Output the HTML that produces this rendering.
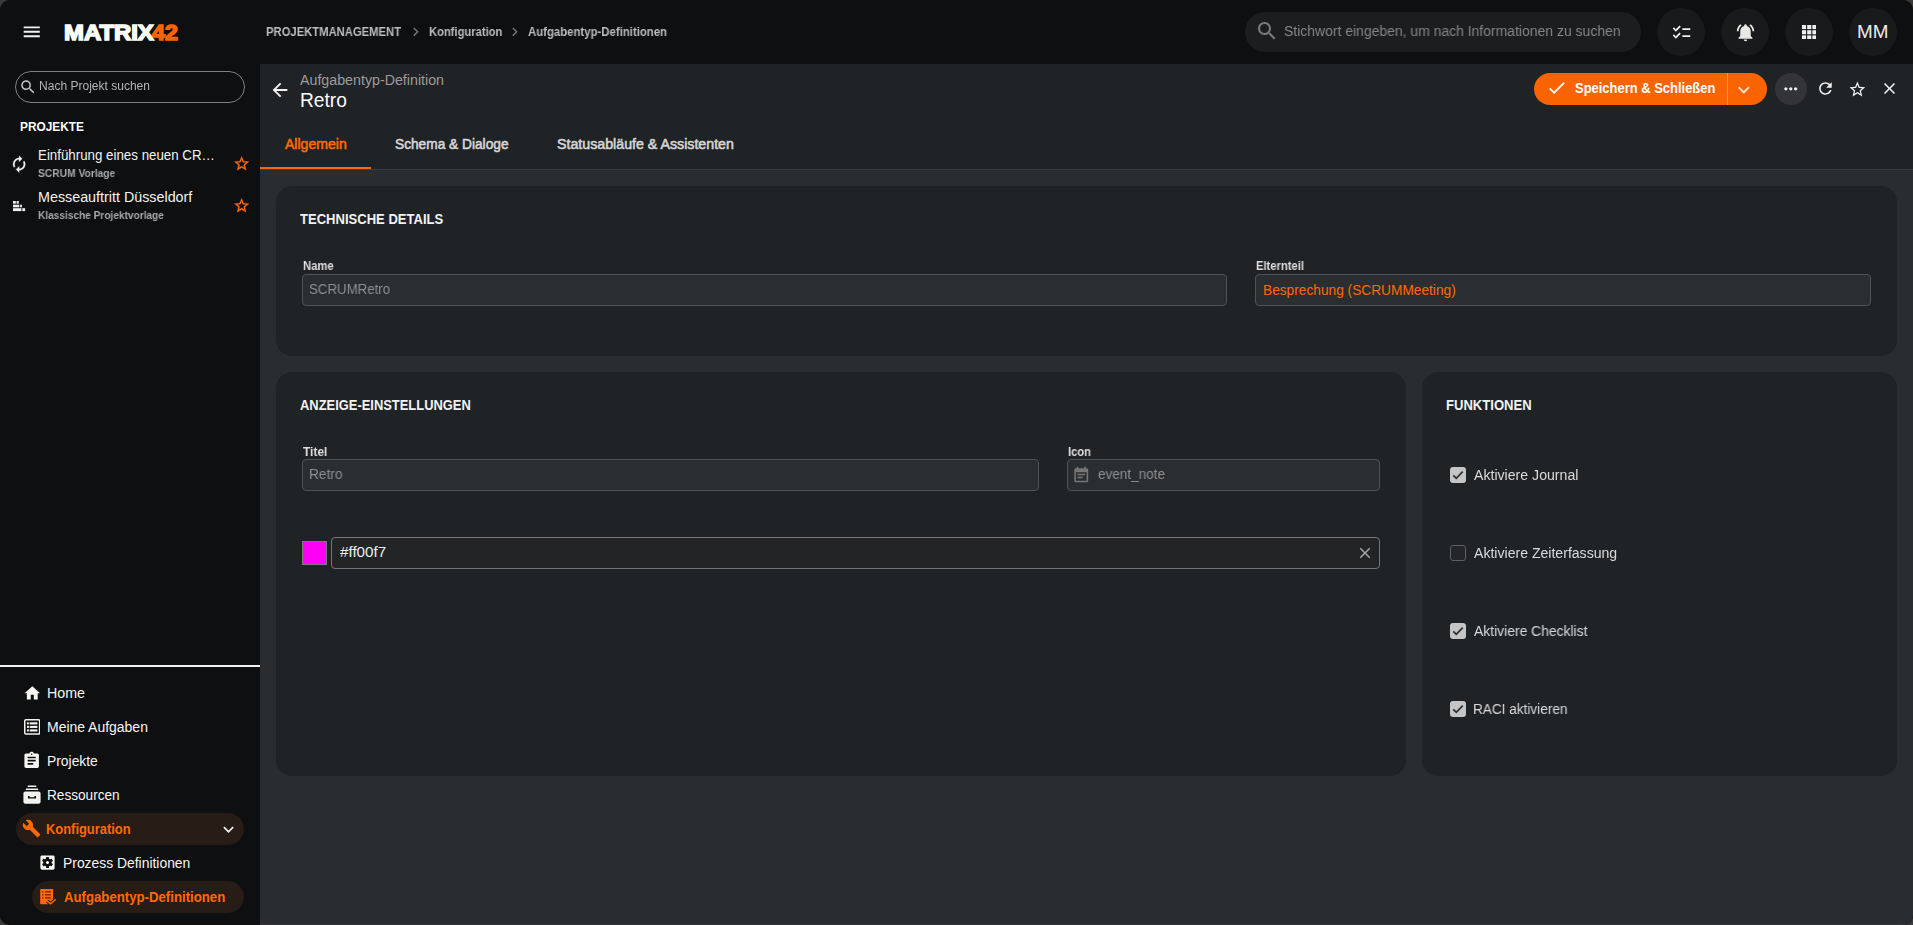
<!DOCTYPE html><html lang="de"><head><meta charset="utf-8"><title>Aufgabentyp-Definition Retro</title><style>html,body{margin:0;padding:0;background:#3a3a3a;}
body{width:1913px;height:925px;position:relative;overflow:hidden;font-family:"Liberation Sans", sans-serif;}
#app{position:absolute;left:0;top:0;width:1913px;height:925px;overflow:hidden;border-radius:10px;background:#0e0f11}
#app>div,#app>svg,#app>span{position:absolute;display:block}
.t{white-space:pre;line-height:1;font-weight:400;transform-origin:0 0}
</style></head><body><div id="app"><div style="left:0px;top:0px;width:1913px;height:925px;background:#0e0f11"></div><div style="left:260px;top:64px;width:1653px;height:106px;background:#202326"></div><div style="left:260px;top:170px;width:1653px;height:755px;background:#2a2d30"></div><div style="left:260px;top:169px;width:1653px;height:1px;background:#3b3e41"></div><div style="left:260px;top:924px;width:1653px;height:1px;background:#36373a"></div><div style="left:260px;top:167px;width:111px;height:2px;background:#ff6900"></div><svg class="i" style="left:21.25px;top:21.25px;width:21.5px;height:21.5px" viewBox="0 0 24 24"><path fill="#f2f2f2" d="M3 18h18v-2H3v2zm0-5h18v-2H3v2zm0-7v2h18V6H3z"/></svg><svg class="i" style="left:406.85px;top:23.35px;width:17.5px;height:17.5px" viewBox="0 0 24 24"><path fill="#747474" d="M10 6L8.59 7.41 13.17 12l-4.58 4.59L10 18l6-6z"/></svg><svg class="i" style="left:505.55px;top:23.35px;width:17.5px;height:17.5px" viewBox="0 0 24 24"><path fill="#747474" d="M10 6L8.59 7.41 13.17 12l-4.58 4.59L10 18l6-6z"/></svg><div style="left:1245px;top:12px;width:396px;height:40px;background:#1c1d1f;border-radius:20px"></div><svg class="i" style="left:1255.10px;top:19.40px;width:24px;height:24px" viewBox="0 0 24 24"><path fill="#7a7a7a" d="M15.5 14h-.79l-.28-.27C15.41 12.59 16 11.11 16 9.5 16 5.91 13.09 3 9.5 3S3 5.91 3 9.5 5.91 16 9.5 16c1.61 0 3.09-.59 4.23-1.57l.27.28v.79l5 4.99L20.49 19l-4.99-5zm-6 0C7.01 14 5 11.99 5 9.5S7.01 5 9.5 5 14 7.01 14 9.5 11.99 14 9.5 14z"/></svg><div style="left:1657px;top:8px;width:48px;height:48px;background:#191a1c;border-radius:50%"></div><div style="left:1721px;top:8px;width:48px;height:48px;background:#191a1c;border-radius:50%"></div><div style="left:1785px;top:8px;width:48px;height:48px;background:#191a1c;border-radius:50%"></div><div style="left:1849px;top:8px;width:48px;height:48px;background:#191a1c;border-radius:50%"></div><svg class="i" style="left:1670.50px;top:21.80px;width:21px;height:21px" viewBox="0 0 24 24"><path fill="#f0f0f0" d="M22 7h-9v2h9V7zm0 8h-9v2h9v-2zM5.54 11L2 7.46l1.41-1.41 2.12 2.12 4.24-4.24 1.41 1.41L5.54 11zm0 8L2 15.46l1.41-1.41 2.12 2.12 4.24-4.24 1.41 1.41L5.54 19z"/></svg><svg class="i" style="left:1734.50px;top:22.00px;width:21px;height:21px" viewBox="0 0 24 24"><path fill="#e8e8e4" d="M7.58 4.08L6.15 2.65C3.75 4.48 2.17 7.3 2.03 10.5h2c.15-2.65 1.51-4.97 3.55-6.42zm12.39 6.42h2c-.15-3.2-1.73-6.02-4.12-7.85l-1.42 1.43c2.02 1.45 3.39 3.77 3.54 6.42zM18 11c0-3.07-1.64-5.64-4.5-6.32V4c0-.83-.67-1.5-1.5-1.5s-1.5.67-1.5 1.5v.68C7.63 5.36 6 7.92 6 11v5l-2 2v1h16v-1l-2-2v-5zm-6 11c.14 0 .27-.01.4-.04.65-.14 1.18-.58 1.44-1.18.1-.24.15-.5.15-.78h-4c.01 1.1.9 2 2.01 2z"/></svg><svg class="i" style="left:1801.8px;top:24.9px;width:14.5px;height:14.5px" viewBox="0 0 14.5 14.5"><g fill="#f0f0f0"><rect x="0.0" y="0.0" width="4.1" height="4.1"/><rect x="5.2" y="0.0" width="4.1" height="4.1"/><rect x="10.4" y="0.0" width="4.1" height="4.1"/><rect x="0.0" y="5.2" width="4.1" height="4.1"/><rect x="5.2" y="5.2" width="4.1" height="4.1"/><rect x="10.4" y="5.2" width="4.1" height="4.1"/><rect x="0.0" y="10.4" width="4.1" height="4.1"/><rect x="5.2" y="10.4" width="4.1" height="4.1"/><rect x="10.4" y="10.4" width="4.1" height="4.1"/></g></svg><div style="left:15px;top:71px;width:230px;height:32px;border:1px solid #808080;border-radius:16px;box-sizing:border-box"></div><svg class="i" style="left:18.80px;top:77.80px;width:18px;height:18px" viewBox="0 0 24 24"><path fill="#c4c4c4" d="M15.5 14h-.79l-.28-.27C15.41 12.59 16 11.11 16 9.5 16 5.91 13.09 3 9.5 3S3 5.91 3 9.5 5.91 16 9.5 16c1.61 0 3.09-.59 4.23-1.57l.27.28v.79l5 4.99L20.49 19l-4.99-5zm-6 0C7.01 14 5 11.99 5 9.5S7.01 5 9.5 5 14 7.01 14 9.5 11.99 14 9.5 14z"/></svg><svg class="i" style="left:9.95px;top:154.75px;width:18.3px;height:18.3px" viewBox="0 0 24 24"><path fill="#f4f4f4" d="M12 6v3l4-4-4-4v3c-4.42 0-8 3.58-8 8 0 1.57.46 3.03 1.24 4.26L6.7 14.8c-.45-.83-.7-1.79-.7-2.8 0-3.31 2.69-6 6-6zm6.76 1.74L17.3 9.2c.44.84.7 1.79.7 2.8 0 3.31-2.69 6-6 6v-3l-4 4 4 4v-3c4.42 0 8-3.58 8-8 0-1.57-.46-3.03-1.24-4.26z" stroke="#f4f4f4" stroke-width="0.4"/></svg><svg class="i" style="left:232.70px;top:155.25px;width:17.3px;height:17.3px" viewBox="0 0 24 24"><path fill="#ff6900" d="M22 9.24l-7.19-.62L12 2 9.19 8.63 2 9.24l5.46 4.73L5.82 21 12 17.27 18.18 21l-1.63-7.03L22 9.24zM12 15.4l-3.76 2.27 1-4.28-3.32-2.88 4.38-.38L12 6.1l1.71 4.04 4.38.38-3.32 2.88 1 4.28L12 15.4z" stroke="#ff6900" stroke-width="0.5"/></svg><svg class="i" style="left:13px;top:201px;width:13px;height:11px" viewBox="0 0 13 11"><g fill="#f0f0f0"><rect x="0" y="0" width="2.800" height="2.700"/><rect x="3.600" y="0" width="2.200" height="2.700"/><rect x="0" y="3.700" width="6.300" height="2.600"/><rect x="7.100" y="3.700" width="1.800" height="2.600"/><rect x="0" y="7.200" width="8.400" height="2.900"/><rect x="9.300" y="7.200" width="2.800" height="2.900"/></g></svg><svg class="i" style="left:232.70px;top:197.25px;width:17.3px;height:17.3px" viewBox="0 0 24 24"><path fill="#ff6900" d="M22 9.24l-7.19-.62L12 2 9.19 8.63 2 9.24l5.46 4.73L5.82 21 12 17.27 18.18 21l-1.63-7.03L22 9.24zM12 15.4l-3.76 2.27 1-4.28-3.32-2.88 4.38-.38L12 6.1l1.71 4.04 4.38.38-3.32 2.88 1 4.28L12 15.4z" stroke="#ff6900" stroke-width="0.5"/></svg><div style="left:0px;top:665px;width:260px;height:2px;background:#f2f2f2"></div><svg class="i" style="left:22.75px;top:683.60px;width:18.6px;height:18.6px" viewBox="0 0 24 24"><path fill="#f6f6f2" d="M10 20v-6h4v6h5v-8h3L12 3 2 12h3v8z"/></svg><svg class="i" style="left:23.7px;top:719px;width:16.4px;height:15.8px" viewBox="0 0 16.4 15.8"><rect x=".75" y=".75" width="14.9" height="14.3" rx="1.2" fill="none" stroke="#f2f2ee" stroke-width="1.5"/><g fill="#f6f6f2"><rect x="3" y="3.3" width="1.900" height="2.100"/><rect x="5.700" y="3.3" width="7.700" height="2.100"/><rect x="3" y="6.850" width="1.900" height="2.100"/><rect x="5.700" y="6.850" width="7.700" height="2.100"/><rect x="3" y="10.400" width="1.900" height="2.100"/><rect x="5.700" y="10.400" width="7.700" height="2.100"/></g></svg><svg class="i" style="left:22.30px;top:751.15px;width:19.3px;height:19.3px" viewBox="0 0 24 24"><path fill="#f6f6f2" d="M19 3h-4.18C14.4 1.84 13.3 1 12 1c-1.3 0-2.4.84-2.82 2H5c-1.1 0-2 .9-2 2v14c0 1.1.9 2 2 2h14c1.1 0 2-.9 2-2V5c0-1.1-.9-2-2-2zm-7 0c.55 0 1 .45 1 1s-.45 1-1 1-1-.45-1-1 .45-1 1-1zm2 14H7v-2h7v2zm3-4H7v-2h10v2zm0-4H7V7h10v2z"/></svg><svg class="i" style="left:23px;top:785px;width:18px;height:20px" viewBox="0 0 18 20"><g fill="#f2f2ee"><rect x="4.6" y="0.6" width="8.8" height="1.5" rx=".5"/><rect x="2.8" y="3.4" width="12.4" height="1.7" rx=".5"/><path d="M2.4 6.6h13.2c1.1 0 2 .9 2 2v8.2c0 1.1-.9 2-2 2H2.4c-1.1 0-2-.9-2-2V8.600c0-1.100.9-2 2-2zM5 11v2.600h8V11h-1.600v1.200H6.600V11z" fill-rule="evenodd"/></g></svg><div style="left:16px;top:813px;width:228px;height:32px;background:#271c16;border-radius:16px"></div><svg class="i" style="left:21.85px;top:819.40px;width:19px;height:19px" viewBox="0 0 24 24"><path fill="#ff6900" d="M22.7 19l-9.1-9.1c.9-2.3.4-5-1.5-6.9-2-2-5-2.4-7.4-1.3L9 6 6 9 1.6 4.7C.4 7.1.9 10.1 2.9 12.1c1.9 1.9 4.6 2.4 6.9 1.5l9.1 9.1c.4.4 1 .4 1.4 0l2.3-2.3c.5-.4.5-1.1.1-1.4z"/></svg><svg class="i" style="left:217.60px;top:818.70px;width:21px;height:21px" viewBox="0 0 24 24"><path fill="#f0f0f0" d="M16.59 8.59L12 13.17 7.41 8.59 6 10l6 6 6-6z"/></svg><svg class="i" style="left:38.40px;top:853.35px;width:19px;height:19px" viewBox="0 0 24 24"><path fill="#f6f6f2" d="M12 10c-1.1 0-2 .9-2 2s.9 2 2 2 2-.9 2-2-.9-2-2-2zm7-7H5c-1.11 0-2 .9-2 2v14c0 1.1.89 2 2 2h14c1.11 0 2-.9 2-2V5c0-1.1-.89-2-2-2zm-1.75 9c0 .23-.02.46-.05.68l1.48 1.16c.13.11.17.3.08.45l-1.4 2.42c-.09.15-.27.21-.43.15l-1.74-.7c-.36.28-.76.51-1.18.69l-.26 1.85c-.03.17-.18.3-.35.3h-2.8c-.17 0-.32-.13-.35-.29l-.26-1.85c-.43-.18-.82-.41-1.18-.69l-1.74.7c-.16.06-.34 0-.43-.15l-1.4-2.42c-.09-.15-.05-.34.08-.45l1.48-1.16c-.03-.23-.05-.46-.05-.69 0-.23.02-.46.05-.68l-1.48-1.16c-.13-.11-.17-.3-.08-.45l1.4-2.42c.09-.15.27-.21.43-.15l1.74.7c.36-.28.76-.51 1.18-.69l.26-1.85c.03-.17.18-.3.35-.3h2.8c.17 0 .32.13.35.29l.26 1.85c.43.18.82.41 1.18.69l1.74-.7c.16-.06.34 0 .43.15l1.4 2.42c.09.15.05.34-.08.45l-1.48 1.16c.03.23.05.46.05.69z"/></svg><div style="left:32px;top:881px;width:212px;height:32px;background:#271c16;border-radius:16px"></div><svg class="i" style="left:40px;top:888.9px;width:17px;height:17px" viewBox="0 0 17 17"><rect x=".2" y="0" width="12.900" height="15.200" rx=".8" fill="#ff6900"/><g fill="#84300d"><rect x="2" y="2.05" width="1.400" height="1.500"/><rect x="5" y="2.05" width="5.900" height="1.500"/><rect x="2" y="5.05" width="1.400" height="1.500"/><rect x="5" y="5.05" width="5.900" height="1.500"/><rect x="2" y="8.15" width="1.400" height="1.500"/><rect x="5" y="8.15" width="5.900" height="1.500"/></g><path fill="none" stroke="#271c16" stroke-width="3.600" d="M7.200 12.100L10.500 14.800L15.800 10.300"/><path fill="none" stroke="#ff6900" stroke-width="1.500" d="M7.200 12.100L10.500 14.800L15.800 10.300"/></svg><svg class="i" style="left:268.80px;top:79.20px;width:22px;height:22px" viewBox="0 0 24 24"><path fill="#f4f4f4" d="M20 11H7.83l5.59-5.59L12 4l-8 8 8 8 1.41-1.41L7.83 13H20v-2z"/></svg><div style="left:1534px;top:73px;width:233px;height:32px;background:#fa6400;border-radius:16px"></div><div style="left:1727px;top:73px;width:1px;height:32px;background:#fc9a5a"></div><svg class="i" style="left:1545.85px;top:77.45px;width:21.5px;height:21.5px" viewBox="0 0 24 24"><path fill="#ffffff" d="M9 16.17L4.83 12l-1.42 1.41L9 19 21 7l-1.41-1.41z"/></svg><svg class="i" style="left:1732.05px;top:77.65px;width:23.5px;height:23.5px" viewBox="0 0 24 24"><path fill="#ffe6d6" d="M16.59 8.59L12 13.17 7.41 8.59 6 10l6 6 6-6z"/></svg><div style="left:1775px;top:73px;width:32px;height:32px;background:#323437;border-radius:50%"></div><svg class="i" style="left:1781.35px;top:79.25px;width:19.5px;height:19.5px" viewBox="0 0 24 24"><path fill="#f0f0f0" d="M6 10c-1.1 0-2 .9-2 2s.9 2 2 2 2-.9 2-2-.9-2-2-2zm12 0c-1.1 0-2 .9-2 2s.9 2 2 2 2-.9 2-2-.9-2-2-2zm-6 0c-1.1 0-2 .9-2 2s.9 2 2 2 2-.9 2-2-.9-2-2-2z"/></svg><svg class="i" style="left:1815.95px;top:79.45px;width:18.9px;height:18.9px" viewBox="0 0 24 24"><path fill="#f0f0f0" d="M17.65 6.35C16.2 4.9 14.21 4 12 4c-4.42 0-7.99 3.58-7.99 8s3.57 8 7.99 8c3.73 0 6.84-2.55 7.73-6h-2.08c-.82 2.33-3.04 4-5.65 4-3.31 0-6-2.69-6-6s2.69-6 6-6c1.66 0 3.14.69 4.22 1.78L13 11h7V4l-2.35 2.35z"/></svg><svg class="i" style="left:1847.80px;top:79.70px;width:18.8px;height:18.8px" viewBox="0 0 24 24"><path fill="#f0f0f0" d="M22 9.24l-7.19-.62L12 2 9.19 8.63 2 9.24l5.46 4.73L5.82 21 12 17.27 18.18 21l-1.63-7.03L22 9.24zM12 15.4l-3.76 2.27 1-4.28-3.32-2.88 4.38-.38L12 6.1l1.71 4.04 4.38.38-3.32 2.88 1 4.28L12 15.4z"/></svg><svg class="i" style="left:1879.55px;top:79.40px;width:19px;height:19px" viewBox="0 0 24 24"><path fill="#f0f0f0" d="M19 6.41L17.59 5 12 10.59 6.41 5 5 6.41 10.59 12 5 17.59 6.41 19 12 13.41 17.59 19 19 17.59 13.41 12z"/></svg><div style="left:276px;top:186px;width:1621px;height:170px;background:#202326;border-radius:16px"></div><div style="left:276px;top:372px;width:1130px;height:404px;background:#202326;border-radius:16px"></div><div style="left:1422px;top:372px;width:475px;height:404px;background:#202326;border-radius:16px"></div><div style="left:302px;top:274px;width:925px;height:32px;background:#2b2e31;border:1px solid #4f5356;border-radius:4px;box-sizing:border-box"></div><div style="left:1255px;top:274px;width:616px;height:32px;background:#2b2e31;border:1px solid #4f5356;border-radius:4px;box-sizing:border-box"></div><div style="left:302px;top:459px;width:737px;height:32px;background:#2b2e31;border:1px solid #4f5356;border-radius:4px;box-sizing:border-box"></div><div style="left:1067px;top:459px;width:313px;height:32px;background:#2b2e31;border:1px solid #4f5356;border-radius:4px;box-sizing:border-box"></div><svg class="i" style="left:1071.65px;top:465.65px;width:18.5px;height:18.5px" viewBox="0 0 24 24"><path fill="#767676" d="M17 10H7v2h10v-2zm2-7h-1V1h-2v2H8V1H6v2H5c-1.11 0-1.99.9-1.99 2L3 19c0 1.1.89 2 2 2h14c1.1 0 2-.9 2-2V5c0-1.1-.9-2-2-2zm0 16H5V8h14v11zm-5-5H7v2h7v-2z"/></svg><div style="left:302px;top:541px;width:25px;height:24px;background:#ff00f7;border:1px solid #7c7c7c;box-sizing:border-box"></div><div style="left:331px;top:537px;width:1049px;height:32px;background:#222426;border:1px solid #74777a;border-radius:4px;box-sizing:border-box"></div><svg class="i" style="left:1356.00px;top:544.20px;width:18px;height:18px" viewBox="0 0 24 24"><path fill="#a6a6a6" d="M19 6.41L17.59 5 12 10.59 6.41 5 5 6.41 10.59 12 5 17.59 6.41 19 12 13.41 17.59 19 19 17.59 13.41 12z"/></svg><div style="left:1450px;top:467px;width:16px;height:16px;background:#c5c5c5;border-radius:3px"></div><svg class="i" style="left:1450px;top:467px;width:16px;height:16px" viewBox="0 0 16 16"><path fill="none" stroke="#303030" stroke-width="1.800" d="M3.300 8.300l3 3 6.400-6.600"/></svg><div style="left:1450px;top:545px;width:16px;height:16px;background:#232528;border:1px solid #5d6063;border-radius:3px;box-sizing:border-box"></div><div style="left:1450px;top:623px;width:16px;height:16px;background:#c5c5c5;border-radius:3px"></div><svg class="i" style="left:1450px;top:623px;width:16px;height:16px" viewBox="0 0 16 16"><path fill="none" stroke="#303030" stroke-width="1.800" d="M3.300 8.300l3 3 6.400-6.600"/></svg><div style="left:1450px;top:701px;width:16px;height:16px;background:#c5c5c5;border-radius:3px"></div><svg class="i" style="left:1450px;top:701px;width:16px;height:16px" viewBox="0 0 16 16"><path fill="none" stroke="#303030" stroke-width="1.800" d="M3.300 8.300l3 3 6.400-6.600"/></svg><span class="t" style="left:151.80px;top:22.88px;font-size:21.4px;color:#fa6400;transform:scaleX(1.0842);font-weight:700;-webkit-text-stroke:1.5px #fa6400;">42</span><span class="t" style="left:63.60px;top:22.88px;font-size:21.4px;color:#fdfdf8;transform:scaleX(1.1168);font-weight:700;-webkit-text-stroke:1.5px #fdfdf8;">MATRIX</span><span class="t" style="left:266.00px;top:26.04px;font-size:12px;color:#bdbdbd;transform:scaleX(0.9374);font-weight:700;will-change:transform;">PROJEKTMANAGEMENT</span><span class="t" style="left:429.30px;top:26.04px;font-size:12px;color:#bdbdbd;transform:scaleX(0.9320);font-weight:700;will-change:transform;">Konfiguration</span><span class="t" style="left:528.00px;top:26.04px;font-size:12px;color:#bdbdbd;transform:scaleX(0.9478);font-weight:700;will-change:transform;">Aufgabentyp-Definitionen</span><span class="t" style="left:1284.00px;top:24.15px;font-size:14px;color:#878787;transform:scaleX(0.9963);will-change:transform;">Stichwort eingeben, um nach Informationen zu suchen</span><span class="t" style="left:1856.90px;top:22.86px;font-size:18px;color:#ececec;transform:scaleX(1.0479);">MM</span><span class="t" style="left:39.00px;top:79.84px;font-size:12px;color:#b4b4b4;transform:scaleX(1.0025);will-change:transform;">Nach Projekt suchen</span><span class="t" style="left:19.80px;top:120.20px;font-size:13px;color:#ffffff;transform:scaleX(0.9119);font-weight:700;">PROJEKTE</span><span class="t" style="left:38.10px;top:148.25px;font-size:14px;color:#f4f4f0;transform:scaleX(0.9510);">Einführung eines neuen CR…</span><span class="t" style="left:38.10px;top:167.79px;font-size:11px;color:#a9a9a9;transform:scaleX(0.9310);font-weight:700;will-change:transform;">SCRUM Vorlage</span><span class="t" style="left:38.10px;top:190.15px;font-size:14px;color:#f4f4f0;transform:scaleX(1.0222);">Messeauftritt Düsseldorf</span><span class="t" style="left:38.10px;top:209.69px;font-size:11px;color:#a9a9a9;transform:scaleX(0.9192);font-weight:700;will-change:transform;">Klassische Projektvorlage</span><span class="t" style="left:46.70px;top:686.15px;font-size:14px;color:#f6f6f2;transform:scaleX(1.0173);">Home</span><span class="t" style="left:47.30px;top:720.15px;font-size:14px;color:#f6f6f2;transform:scaleX(0.9970);">Meine Aufgaben</span><span class="t" style="left:47.30px;top:754.15px;font-size:14px;color:#f6f6f2;transform:scaleX(0.9891);">Projekte</span><span class="t" style="left:47.30px;top:788.15px;font-size:14px;color:#f6f6f2;transform:scaleX(0.9732);">Ressourcen</span><span class="t" style="left:46.10px;top:822.15px;font-size:14px;color:#ff6900;transform:scaleX(0.9219);font-weight:700;">Konfiguration</span><span class="t" style="left:63.20px;top:856.15px;font-size:14px;color:#f6f6f2;transform:scaleX(0.9914);">Prozess Definitionen</span><span class="t" style="left:63.60px;top:890.15px;font-size:14px;color:#ff6900;transform:scaleX(0.9421);font-weight:700;">Aufgabentyp-Definitionen</span><span class="t" style="left:300.20px;top:73.35px;font-size:14px;color:#9c9c9c;transform:scaleX(1.0165);">Aufgabentyp-Definition</span><span class="t" style="left:300.00px;top:89.87px;font-size:20px;color:#ffffff;transform:scaleX(0.9590);">Retro</span><span class="t" style="left:1574.80px;top:81.05px;font-size:14px;color:#ffffff;transform:scaleX(0.9254);font-weight:700;">Speichern &amp; Schließen</span><span class="t" style="left:284.90px;top:137.15px;font-size:14px;color:#ff6900;transform:scaleX(1.0039);-webkit-text-stroke:0.55px #ff6900;">Allgemein</span><span class="t" style="left:395.00px;top:137.15px;font-size:14px;color:#d6d6d6;transform:scaleX(0.9789);-webkit-text-stroke:0.55px #d6d6d6;">Schema &amp; Dialoge</span><span class="t" style="left:557.00px;top:137.15px;font-size:14px;color:#d6d6d6;transform:scaleX(1.0147);-webkit-text-stroke:0.55px #d6d6d6;">Statusabläufe &amp; Assistenten</span><span class="t" style="left:300.00px;top:212.45px;font-size:14px;color:#f2f2f2;transform:scaleX(0.9320);font-weight:700;">TECHNISCHE DETAILS</span><span class="t" style="left:300.00px;top:398.45px;font-size:14px;color:#f2f2f2;transform:scaleX(0.9226);font-weight:700;">ANZEIGE-EINSTELLUNGEN</span><span class="t" style="left:1446.00px;top:398.45px;font-size:14px;color:#f2f2f2;transform:scaleX(0.9337);font-weight:700;">FUNKTIONEN</span><span class="t" style="left:302.70px;top:259.74px;font-size:12px;color:#dedede;transform:scaleX(0.9396);font-weight:700;will-change:transform;">Name</span><span class="t" style="left:309.30px;top:282.25px;font-size:14px;color:#8f8f8f;transform:scaleX(0.9478);will-change:transform;">SCRUMRetro</span><span class="t" style="left:1255.80px;top:259.74px;font-size:12px;color:#dedede;transform:scaleX(0.9326);font-weight:700;will-change:transform;">Elternteil</span><span class="t" style="left:1263.00px;top:282.75px;font-size:14px;color:#ff6900;transform:scaleX(0.9789);">Besprechung (SCRUMMeeting)</span><span class="t" style="left:302.70px;top:445.64px;font-size:12px;color:#dedede;transform:scaleX(0.9937);font-weight:700;will-change:transform;">Titel</span><span class="t" style="left:309.10px;top:467.25px;font-size:14px;color:#8f8f8f;transform:scaleX(0.9790);will-change:transform;">Retro</span><span class="t" style="left:1067.70px;top:445.64px;font-size:12px;color:#dedede;transform:scaleX(0.9322);font-weight:700;will-change:transform;">Icon</span><span class="t" style="left:1097.80px;top:467.25px;font-size:14px;color:#8f8f8f;transform:scaleX(0.9683);will-change:transform;">event_note</span><span class="t" style="left:339.50px;top:545.15px;font-size:14px;color:#ececec;transform:scaleX(1.0855);">#ff00f7</span><span class="t" style="left:1474.20px;top:468.25px;font-size:14px;color:#dadada;transform:scaleX(1.0087);will-change:transform;">Aktiviere Journal</span><span class="t" style="left:1474.20px;top:546.25px;font-size:14px;color:#dadada;transform:scaleX(1.0056);will-change:transform;">Aktiviere Zeiterfassung</span><span class="t" style="left:1474.20px;top:624.25px;font-size:14px;color:#dadada;transform:scaleX(0.9924);will-change:transform;">Aktiviere Checklist</span><span class="t" style="left:1473.00px;top:702.25px;font-size:14px;color:#dadada;transform:scaleX(0.9716);will-change:transform;">RACI aktivieren</span></div></body></html>
